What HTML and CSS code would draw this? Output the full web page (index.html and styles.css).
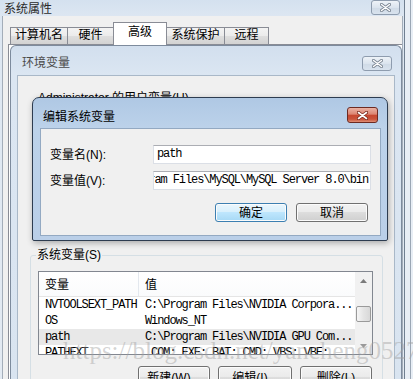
FILE: index.html
```html
<!DOCTYPE html>
<html lang="zh-CN">
<head>
  <meta charset="UTF-8">
  <title>系统属性 - 环境变量</title>
  <link rel="stylesheet" href="styles.css">
</head>
<body>
  <div class="desktop">
    <!-- Outer window: System Properties -->
    <div class="sys-window">
      <div class="sys-title">
        <span class="title-text">系统属性</span>
        <span class="close-btn sys-close">
          <svg width="11" height="9" viewBox="0 0 11 9"><path d="M1.5 1.5 L9.5 7.5 M9.5 1.5 L1.5 7.5" stroke="#7c8794" stroke-width="3.2" stroke-linecap="round"/><path d="M1.5 1.5 L9.5 7.5 M9.5 1.5 L1.5 7.5" stroke="#fff" stroke-width="1.4" stroke-linecap="round"/></svg>
        </span>
      </div>
      <div class="sys-client">
        <div class="tabs">
          <div class="tab t1">计算机名</div>
          <div class="tab t2">硬件</div>
          <div class="tab t3 active">高级</div>
          <div class="tab t4">系统保护</div>
          <div class="tab t5">远程</div>
        </div>
        <div class="tab-panel">
          <!-- Environment variables window -->
          <div class="env-window">
            <div class="env-title">
              <span class="title-text">环境变量</span>
              <span class="close-btn env-close">
                <svg width="11" height="9" viewBox="0 0 11 9"><path d="M1.5 1.5 L9.5 7.5 M9.5 1.5 L1.5 7.5" stroke="#7c8794" stroke-width="3.2" stroke-linecap="round"/><path d="M1.5 1.5 L9.5 7.5 M9.5 1.5 L1.5 7.5" stroke="#fff" stroke-width="1.4" stroke-linecap="round"/></svg>
              </span>
            </div>
            <div class="env-body">
              <div class="user-label">Administrator 的用户变量(U)</div>
              <div class="user-area"></div>
              <fieldset class="group">
                <legend>系统变量(S)</legend>
                <div class="listview">
                  <div class="lv-main">
                    <div class="lv-header">
                      <div class="c1">变量</div>
                      <div class="c2">值</div>
                    </div>
                    <div class="lv-row">
                      <div class="c1">NVTOOLSEXT_PATH</div>
                      <div class="c2">C:\Program Files\NVIDIA Corpora...</div>
                    </div>
                    <div class="lv-row">
                      <div class="c1">OS</div>
                      <div class="c2">Windows_NT</div>
                    </div>
                    <div class="lv-row hl">
                      <div class="c1">path</div>
                      <div class="c2">C:\Program Files\NVIDIA GPU Com...</div>
                    </div>
                    <div class="lv-row">
                      <div class="c1">PATHEXT</div>
                      <div class="c2">.COM;.EXE;.BAT;.CMD;.VBS;.VBE;...</div>
                    </div>
                  </div>
                  <div class="lv-scroll">
                    <div class="sb-arrow">
                      <svg width="7" height="4" viewBox="0 0 7 4"><polygon points="3.5,0 7,4 0,4" fill="#7a7a7a"/></svg>
                    </div>
                    <div class="sb-thumb"></div>
                    <div class="sb-arrow down">
                      <svg width="7" height="4" viewBox="0 0 7 4"><polygon points="0,0 7,0 3.5,4" fill="#9a9a9a"/></svg>
                    </div>
                  </div>
                </div>
                <div class="group-buttons">
                  <button class="btn w72">新建(W)...</button>
                  <button class="btn w74">编辑(I)...</button>
                  <button class="btn w72">删除(L)</button>
                </div>
              </fieldset>
            </div>

            <!-- Edit system variable dialog, floats over the env window -->
            <div class="edit-dialog">
              <div class="dlg-title">
                <span class="title-text">编辑系统变量</span>
                <span class="close-btn red">
                  <svg width="11" height="9" viewBox="0 0 11 9"><path d="M1.5 1.5 L9.5 7.5 M9.5 1.5 L1.5 7.5" stroke="#7a2c20" stroke-width="3.4" stroke-linecap="round"/><path d="M1.5 1.5 L9.5 7.5 M9.5 1.5 L1.5 7.5" stroke="#fff" stroke-width="1.6" stroke-linecap="round"/></svg>
                </span>
              </div>
              <div class="dlg-body">
                <div class="dlg-row">
                  <div class="dlg-label">变量名(N):</div>
                  <div class="dlg-input"><span>path</span></div>
                </div>
                <div class="dlg-row">
                  <div class="dlg-label">变量值(V):</div>
                  <div class="dlg-input scrolled"><span>C:\Program Files\MySQL\MySQL Server 8.0\bin</span></div>
                </div>
                <div class="dlg-buttons">
                  <button class="btn default">确定</button>
                  <button class="btn">取消</button>
                </div>
              </div>
            </div>
          </div>
        </div>
      </div>
    </div>
    <div class="desktop-edge"><div class="edge-line"></div></div>
    <div class="watermark">https://blog.csdn.net/yancheng0527</div>
  </div>
</body>
</html>
```

FILE: styles.css
```css
/* Base page */
* {
  box-sizing: border-box;
}

body {
  margin: 0;
  font-family: "Liberation Sans", "Noto Sans CJK SC", sans-serif;
  font-size: 12px;
  line-height: 14px;
  color: #000;
}

.desktop {
  position: relative;
  display: flex;
  width: 413px;
  height: 379px;
  overflow: hidden;
  background: #e8eef5;
}

/* Outer window frame */
.sys-window {
  flex: none;
  width: 405px;
  display: flex;
  flex-direction: column;
  background: linear-gradient(#d4e1ef, #dde7f2 18px, #e3eaf2);
  border-right: 1px solid #707f90;
}

.sys-title {
  display: flex;
  height: 18px;
  padding-left: 4px;
}

.sys-title .title-text {
  padding-top: 2px;
  color: #2a2a2a;
}

/* Caption close buttons */
.close-btn {
  display: flex;
  align-items: center;
  justify-content: center;
  border: 1px solid #8e9cae;
  border-radius: 3px;
  background: linear-gradient(#eef3f8, #dbe4ee 50%, #cfdae6 51%, #d9e3ee);
}

.sys-close {
  margin-left: auto;
  margin-right: 4px;
  width: 29px;
  height: 15px;
}

.env-close {
  margin-left: auto;
  margin-right: 9px;
  margin-top: 10px;
  width: 30px;
  height: 15px;
}

.close-btn.red {
  margin-left: auto;
  margin-right: 9px;
  margin-top: 9px;
  width: 31px;
  height: 16px;
  border-color: #6d2a22;
  background: linear-gradient(#eab2a4, #dc8471 45%, #c7462f 50%, #c9533a 80%, #e09078);
}

.sys-client {
  flex: 1;
  margin: 0 1px 0 2px;
  border-left: 1px solid #a3adb9;
  border-right: 1px solid #a3adb9;
  background: #f0f0f0;
  display: flex;
  flex-direction: column;
}

/* Tab strip */
.tabs {
  display: flex;
  align-items: flex-end;
  height: 28px;
  padding-left: 7px;
}

.tab {
  height: 17px;
  margin-left: -1px;
  border: 1px solid #898c95;
  border-bottom: none;
  background: linear-gradient(#f3f3f3, #ebebeb 50%, #dedede 51%, #d2d2d2);
  text-align: center;
  line-height: 15px;
}

.tab.t1 { width: 58px; margin-left: 0; }
.tab.t2 { width: 47px; }
.tab.t3 { width: 54px; }
.tab.t4 { width: 59px; }
.tab.t5 { width: 45px; }

.tab.active {
  position: relative;
  z-index: 1;
  height: 23px;
  margin-bottom: -1px;
  padding-top: 2px;
  line-height: 14px;
  background: #fff;
}

.tab-panel {
  flex: 1;
  margin-left: 5px;
  border-left: 1px solid #898c95;
  border-top: 1px solid #898c95;
  background: #fff;
  padding-left: 1px;
}

/* Environment variables window */
.env-window {
  position: relative;
  width: 392px;
  height: 340px;
  border: 1px solid #7d8b9d;
  border-bottom: none;
  border-radius: 6px 6px 0 0;
  background: linear-gradient(#d2dfee, #dbe6f2 29px, #d9e4f0);
}

.env-title {
  display: flex;
  align-items: flex-start;
  height: 29px;
  padding-left: 11px;
}

.env-title .title-text {
  margin-top: 10px;
  color: #4a4a4a;
}

.env-body {
  margin: 0 6px;
  height: 311px;
  border: 1px solid #a9b8c8;
  border-bottom: none;
  background: #f0f0f0;
}

.user-label {
  margin: 15px 0 0 20px;
}

.user-area {
  height: 143px;
}

.group {
  margin: 0 11px 0 12px;
  padding: 9px 9px 8px 7px;
  min-width: 0;
  border: 1px solid #d5dfe5;
  border-radius: 3px;
}

.group legend {
  padding: 0 1px;
  margin-left: -2px;
  line-height: 14px;
}

/* List view */
.listview {
  display: flex;
  height: 84px;
  border: 1px solid #828790;
  background: #fff;
  overflow: hidden;
}

.lv-main {
  flex: 1;
  min-width: 0;
}

.lv-header {
  display: flex;
  height: 25px;
  border-bottom: 1px solid #e5e5e5;
  background: linear-gradient(#fff, #fafbfc);
}

.lv-header .c1,
.lv-header .c2 {
  padding-top: 6px;
}

.c1 {
  flex: none;
  width: 100px;
  padding-left: 6px;
}

.lv-header .c1 {
  border-right: 1px solid #e3e8ee;
}

.c2 {
  flex: 1;
  min-width: 0;
  padding-left: 6px;
  overflow: hidden;
}

.lv-row {
  display: flex;
  height: 16px;
  line-height: 16px;
  font-family: "Liberation Mono", monospace;
  font-size: 12px;
  letter-spacing: -1.1px;
  white-space: nowrap;
}

.lv-row.hl {
  background: #e8e8e8;
}

.lv-scroll {
  flex: none;
  width: 17px;
  display: flex;
  flex-direction: column;
  background: #f1f1f1;
}

.sb-arrow {
  height: 17px;
  display: flex;
  align-items: center;
  justify-content: center;
}

.sb-arrow.down {
  margin-top: auto;
}

.sb-thumb {
  width: 15px;
  height: 16px;
  margin: 17px 0 0 1px;
  border: 1px solid #9a9a9a;
  border-radius: 2px;
  background: linear-gradient(90deg, #f6f6f6, #e4e4e4 50%, #d8d8d8);
}

.group-buttons {
  display: flex;
  justify-content: flex-end;
  gap: 8px;
  margin-top: 11px;
  padding-right: 1px;
}

/* Push buttons */
.btn {
  width: 72px;
  height: 23px;
  padding: 0;
  border: 1px solid #707070;
  border-radius: 3px;
  background: linear-gradient(#f2f2f2, #ebebeb 45%, #dddddd 50%, #cfcfcf);
  box-shadow: inset 0 0 0 1px #fbfbfb;
  font: inherit;
  color: #000;
  text-align: center;
}

.btn.w74 {
  width: 74px;
}

.btn.default {
  border-color: #3c7fb1;
  background: linear-gradient(#eaf6fd, #d9f0fc 45%, #bee6fd 50%, #a7d9f5);
}

/* Edit system variable dialog */
.edit-dialog {
  position: absolute;
  left: 21px;
  top: 51px;
  width: 356px;
  height: 144px;
  display: flex;
  flex-direction: column;
  border: 1px solid #2d3c50;
  border-radius: 7px 7px 2px 2px;
  background: linear-gradient(#afc8e4, #bcd2ea 30px, #bacfe8);
  box-shadow: 1px 2px 6px rgba(0, 0, 0, 0.3);
}

.dlg-title {
  display: flex;
  align-items: flex-start;
  height: 30px;
  padding-left: 10px;
}

.dlg-title .title-text {
  margin-top: 12px;
}

.dlg-body {
  flex: none;
  height: 108px;
  margin: 0 6px 4px 7px;
  padding: 16px 9px 0 9px;
  border: 1px solid #93a9c2;
  background: #f0f0f0;
}

.dlg-row {
  display: flex;
  align-items: center;
  margin-bottom: 7px;
}

.dlg-label {
  width: 103px;
}

.dlg-input {
  display: flex;
  width: 218px;
  height: 19px;
  padding: 0 2px 0 3px;
  border: 1px solid #dbdfe6;
  border-top-color: #abadb3;
  background: #fff;
  overflow: hidden;
  white-space: nowrap;
  font-family: "Liberation Mono", monospace;
  font-size: 12px;
  letter-spacing: -1.1px;
  line-height: 17px;
}

.dlg-input span {
  flex: none;
}

.dlg-input.scrolled {
  justify-content: flex-end;
}

.dlg-buttons {
  display: flex;
  justify-content: flex-end;
  gap: 9px;
  margin-top: 13px;
  padding-right: 3px;
}

.dlg-buttons .btn {
  height: 19px;
}

/* Strip of desktop to the right */
.desktop-edge {
  flex: 1;
  display: flex;
  justify-content: flex-end;
  padding-right: 2px;
}

.edge-line {
  width: 1px;
  background: #9aa6b4;
}

/* Blog watermark over the screenshot */
.watermark {
  position: absolute;
  left: 63px;
  top: 337px;
  font-family: "Liberation Serif", serif;
  font-size: 25px;
  line-height: 28px;
  color: rgba(160, 160, 160, 0.45);
  white-space: nowrap;
  pointer-events: none;
}
```
